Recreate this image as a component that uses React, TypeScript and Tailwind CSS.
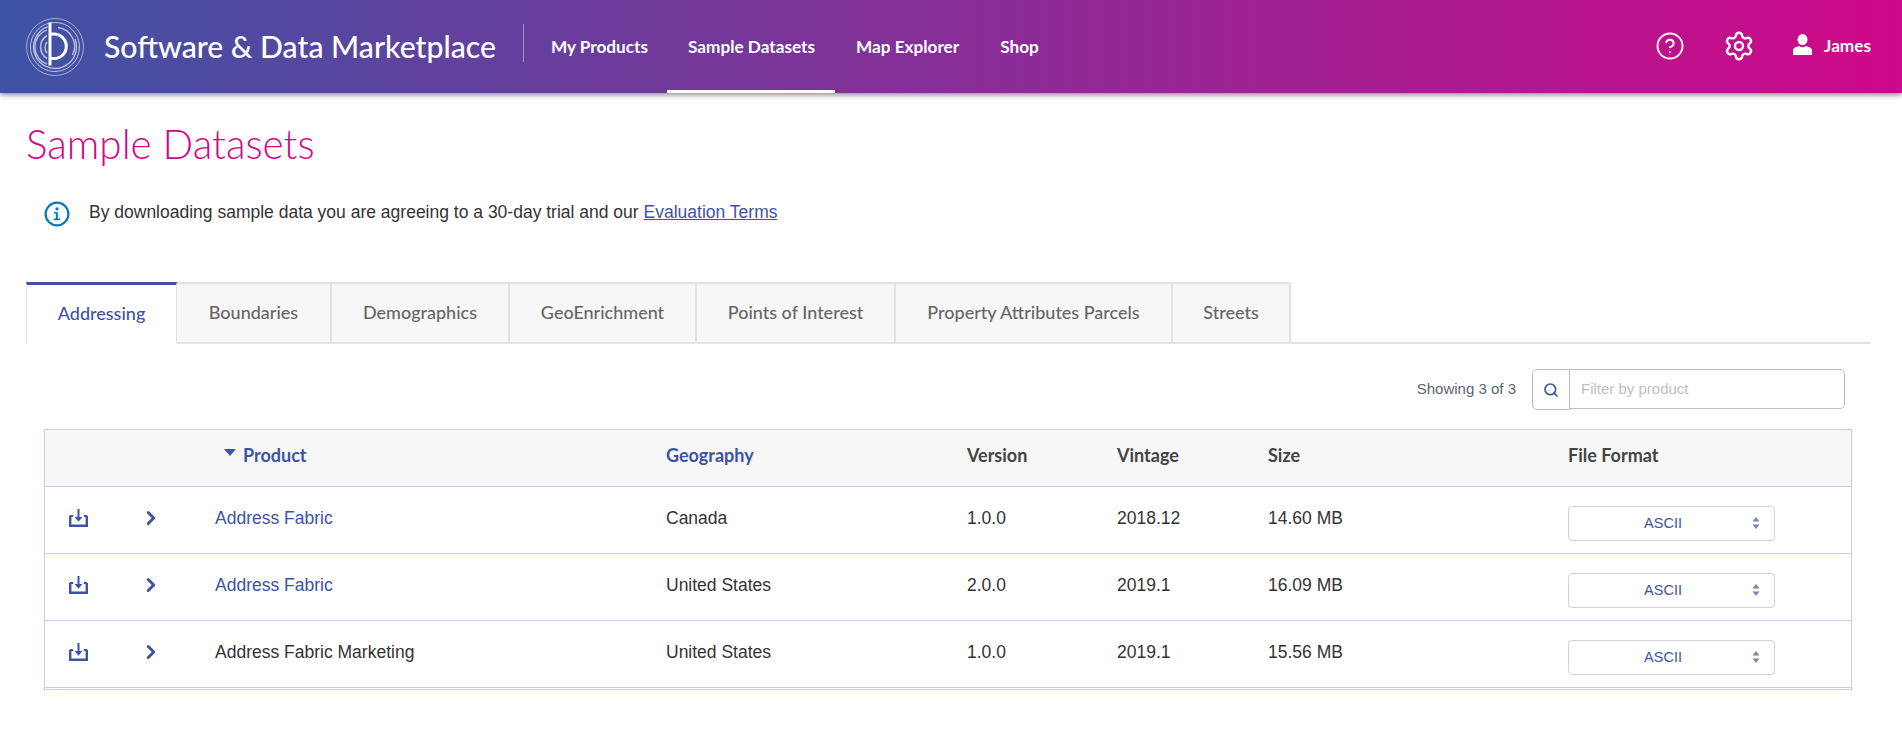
import { CircleHelp, Settings, Search, ChevronRight } from "lucide-react";

const brand = "font-['Lato',sans-serif]";
const arial = "font-['Liberation_Sans',Arial,sans-serif]";

const Logo = () => (
  <svg width="60" height="60" viewBox="0 0 60 60" fill="none" className="shrink-0">
    <g stroke="#fff" fill="none">
      <circle cx="30" cy="30" r="28.5" strokeWidth="0.7" opacity="0.75" />
      <path d="M30 5.5a24.5 24.5 0 1 1-.1 0" strokeWidth="1" opacity="0.65" />
      <path d="M23 9.6A21.5 21.5 0 1 0 50 22" strokeWidth="1.3" opacity="0.65" />
      <path d="M33 10.5A19 19 0 0 1 47.5 38" strokeWidth="1.3" opacity="0.65" />
      <path d="M22 13A18 18 0 0 0 22 47" strokeWidth="1.3" opacity="0.65" />
      <path d="M22 18.5A13.5 13.5 0 0 0 22 41.5" strokeWidth="1.5" opacity="0.65" />
      <path d="M22 25A8.5 8.5 0 0 0 22 36" strokeWidth="1.5" opacity="0.65" />
      <path d="M25 5.5V48.5" strokeWidth="3" />
      <path d="M25 17H29A12.3 12.3 0 0 1 29 41.6H25" strokeWidth="3" />
    </g>
  </svg>
);

const Person = () => (
  <svg width="19" height="21" viewBox="0 0 19 21" fill="#fff">
    <ellipse cx="9.5" cy="5.6" rx="5" ry="5.6" />
    <path d="M0 21v-4.6c0-2 1.4-3 3.2-3.5l3-.9c1 .8 2 1.2 3.3 1.2s2.3-.4 3.3-1.2l3 .9c1.8.5 3.2 1.5 3.2 3.5V21z" />
  </svg>
);

const Info = () => (
  <svg width="26" height="26" viewBox="0 0 26 26" fill="none" className="shrink-0">
    <circle cx="13" cy="13" r="11.4" stroke="#0a78b8" strokeWidth="2.2" />
    <circle cx="13" cy="7.8" r="1.6" fill="#0a78b8" />
    <path d="M10 11.2h3.8v6.6H16v1.2H9.8v-1.2H12v-5.4h-2z" fill="#0a78b8" stroke="#0a78b8" strokeWidth="0.4" />
  </svg>
);

const DownloadTray = () => (
  <svg width="19" height="18" viewBox="0 0 19 18" fill="none" stroke="#3e53a4">
    <path d="M1.2 7v9.8h16.6V7" strokeWidth="2.4" />
    <path d="M1 7h3.2M14.8 7H18" strokeWidth="1.8" />
    <path d="M9.5 0v11" strokeWidth="2" />
    <path d="M5.6 8h7.8L9.5 12.8z" fill="#3e53a4" stroke="none" />
  </svg>
);

const tabs = [
  { t: "Boundaries", w: "w-[155px]" },
  { t: "Demographics", w: "w-[178px]" },
  { t: "GeoEnrichment", w: "w-[187px]" },
  { t: "Points of Interest", w: "w-[199px]" },
  { t: "Property Attributes Parcels", w: "w-[277px]" },
  { t: "Streets", w: "w-[118px]" },
];

const rows = [
  { p: "Address Fabric", link: true, g: "Canada", v: "1.0.0", y: "2018.12", s: "14.60 MB" },
  { p: "Address Fabric", link: true, g: "United States", v: "2.0.0", y: "2019.1", s: "16.09 MB" },
  { p: "Address Fabric Marketing", link: false, g: "United States", v: "1.0.0", y: "2019.1", s: "15.56 MB" },
];

const cols = "grid grid-cols-[65px_105px_451px_301px_150px_151px_300px_1fr]";

export default function App() {
  return (
    <div className={`min-h-[751px] bg-white ${arial}`}>
      <header className={`flex h-[93px] items-stretch bg-[linear-gradient(to_right,#3e53a4,#cf0989)] pl-[25px] pr-[31px] text-white shadow-[0_2px_5px_rgba(0,0,0,0.45)] ${brand}`}>
        <div className="flex items-center">
          <Logo />
        </div>
        <div className="ml-[19px] flex items-center text-[30.2px] font-medium">
          Software &amp; Data Marketplace
        </div>
        <div className="ml-[27px] mt-[24px] h-[38px] w-px bg-white/40" />
        <nav className="ml-[7px] flex text-[17.2px] font-bold">
          <a className="flex items-center pl-[20px] pr-[19px]">My Products</a>
          <a className="flex items-center border-b-[3px] border-white pl-[21px] pr-[20px] pt-[3px]">Sample Datasets</a>
          <a className="flex items-center pl-[21px] pr-[20px]">Map Explorer</a>
          <a className="flex items-center pl-[21px] pr-[20px]">Shop</a>
        </nav>
        <div className="ml-auto flex items-center pb-[2px] text-[17.2px] font-bold">
          <CircleHelp size={30} strokeWidth={1.5} />
          <Settings size={32} strokeWidth={1.8} className="ml-[38px]" />
          <div className="ml-[38px] flex items-center gap-[12px] pb-[2px]">
            <Person />
            <span className="mt-[2px]">James</span>
          </div>
        </div>
      </header>

      <main className="pl-[26px] pr-[32px]">
        <h1 className={`mt-[25px] text-[40.4px] font-light leading-[52px] text-[#cf0989] ${brand}`}>Sample Datasets</h1>

        <div className="mt-[29px] flex h-[30px] items-center pl-[18px] text-[17.5px] text-[#333]">
          <Info />
          <span className="ml-[19px] mb-[3px]">
            By downloading sample data you are agreeing to a 30-day trial and our{" "}
            <a className="text-[#3e53a4] underline">Evaluation Terms</a>
          </span>
        </div>

        <div className={`mt-[53px] flex h-[62px] border-b-2 border-[#e3e3e3] text-[18px] ${brand}`}>
          <div className="flex h-[62px] w-[151px] items-center justify-center border-x border-t-[3px] border-x-[#e3e3e3] border-t-[#3e53a4] bg-white pb-[2px] font-medium text-[#3e53a4]">
            Addressing
          </div>
          {tabs.map((x) => (
            <div key={x.t} className={`flex h-[60px] items-center justify-center border-r-2 border-t-2 border-[#e3e3e3] bg-[#f7f7f7] pb-[2px] font-medium text-[#666] ${x.w}`}>
              {x.t}
            </div>
          ))}
        </div>

        <div className="mt-[25px] flex items-center justify-end pr-[25px] text-[15px]">
          <span className="mr-[16px] text-[#5a6470]">Showing 3 of 3</span>
          <div className="flex h-[41px] w-[38px] items-center justify-center rounded-l-[5px] border border-[#bdbdbd] text-[#3e53a4]">
            <Search size={16} strokeWidth={2.5} />
          </div>
          <div className="mb-px flex h-[40px] w-[275px] items-center rounded-r-[5px] border border-l-0 border-[#bdbdbd] pl-[11px] text-[#c0c0c0]">
            Filter by product
          </div>
        </div>

        <div className="ml-[18px] mr-[18px] mt-[19px] border border-[#c6cde8] pb-px text-[17.5px] text-[#333]">
          <div className={`${cols} h-[57px] items-center border-b border-[#c6cde8] bg-[#f7f7f7] pb-[6px] text-[18px] font-bold text-[#444] ${brand}`}>
            <div />
            <div />
            <div className="flex items-center pl-[9px] text-[#3e53a4]">
              <svg width="12" height="8" viewBox="0 0 12 8" fill="#3e53a4" className="mb-[4px] mr-[7px]">
                <path d="M0 0h12L6 7z" />
              </svg>
              Product
            </div>
            <div className="text-[#3e53a4]">Geography</div>
            <div>Version</div>
            <div>Vintage</div>
            <div>Size</div>
            <div>File Format</div>
          </div>
          {rows.map((r, i) => (
            <div key={i} className={`${cols} h-[67px] items-center border-b border-[#c6cde8]`}>
              <div className="pl-[24px] pb-[5px]">
                <DownloadTray />
              </div>
              <div className="pl-[30px] pb-[5px] text-[#3e53a4]">
                <ChevronRight size={22} strokeWidth={3.2} />
              </div>
              <div className={`pb-[3px] ${r.link ? "text-[#3e53a4]" : ""}`}>{r.p}</div>
              <div className="pb-[3px]">{r.g}</div>
              <div className="pb-[3px]">{r.v}</div>
              <div className="pb-[3px]">{r.y}</div>
              <div className="pb-[3px]">{r.s}</div>
              <div className="pt-[7px]">
                <div className="relative flex h-[35px] w-[207px] items-center justify-center rounded-[4px] border border-[#d3d3d3] pr-[17px] text-[14.5px] text-[#3e53a4]">
                  ASCII
                  <svg width="8" height="12" viewBox="0 0 8 12" fill="#3e53a4" className="absolute right-[14px] top-[10px] opacity-70">
                    <path d="M4 0l3.5 4.5h-7zM4 12l3.5-4.5h-7z" />
                  </svg>
                </div>
              </div>
            </div>
          ))}
        </div>
      </main>
    </div>
  );
}
